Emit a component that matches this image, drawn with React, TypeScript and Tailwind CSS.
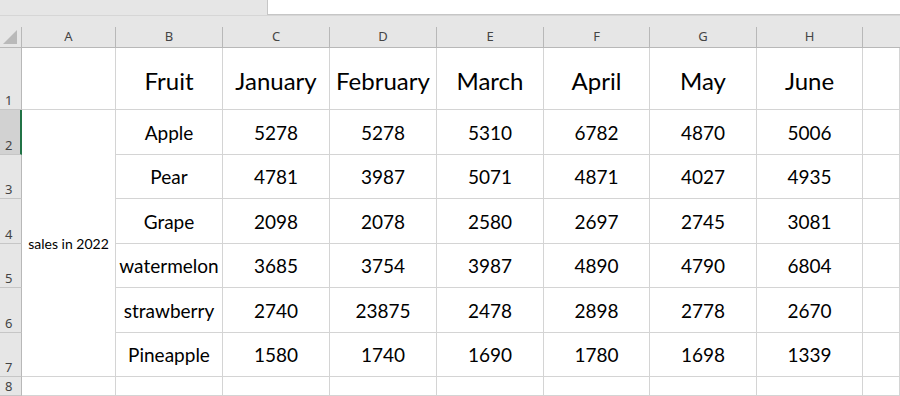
import React from "react";

const cols = ["A", "B", "C", "D", "E", "F", "G", "H"];
const months = ["Fruit", "January", "February", "March", "April", "May", "June"];

const rows: [string, number[]][] = [
  ["Apple", [5278, 5278, 5310, 6782, 4870, 5006]],
  ["Pear", [4781, 3987, 5071, 4871, 4027, 4935]],
  ["Grape", [2098, 2078, 2580, 2697, 2745, 3081]],
  ["watermelon", [3685, 3754, 3987, 4890, 4790, 6804]],
  ["strawberry", [2740, 23875, 2478, 2898, 2778, 2670]],
  ["Pineapple", [1580, 1740, 1690, 1780, 1698, 1339]],
];

const gridCols = "grid grid-cols-[22px_94px_107px_107px_107px_107px_106px_107px_106px_1fr]";

const RowHead = ({ n, active }: { n: number; active?: boolean }) => (
  <div
    className={
      "flex items-end pl-[5px] pb-[2px] text-[13px] leading-none text-[#444] font-['Noto_Sans'] border-b border-[#c6c6c6] " +
      (active ? "bg-[#d2d2d2] border-r-2 border-r-[#217346]" : "bg-[#e6e6e6] border-r border-r-[#b8b8b8]")
    }
  >
    {n}
  </div>
);

const Cell = ({ children, className = "" }: { children?: React.ReactNode; className?: string }) => (
  <div className={"flex items-center justify-center border-r border-b border-[#d4d4d4] text-black " + className}>
    {children}
  </div>
);

export default function App() {
  return (
    <div className="w-[900px] h-[396px] overflow-hidden bg-white font-['Lato',sans-serif]">
      {/* formula bar strip */}
      <div className="h-[16px] flex bg-[#e6e6e6] border-b border-[#d6d6d6]">
        <div className="w-[267px]" />
        <div className="flex-1 h-[15px] bg-white border-l border-b border-[#c6c6c6]" />
      </div>

      {/* column headers */}
      <div className={gridCols + " h-[32px] pt-[11px] bg-[#e6e6e6] border-b border-[#b8b8b8]"}>
        <div className="relative border-r border-[#b8b8b8]">
          <svg width="14" height="14" className="absolute right-[4px] bottom-[3px]">
            <polygon points="14,0 14,14 0,14" fill="#b9b9b9" />
          </svg>
        </div>
        {cols.map((c) => (
          <div
            key={c}
            className="flex items-center justify-center border-r border-[#b8b8b8] text-[13px] text-[#444] font-['Noto_Sans']"
          >
            {c}
          </div>
        ))}
        <div />
      </div>

      {/* sheet body */}
      <div className={gridCols + " grid-rows-[62px_45px_44px_45px_44px_45px_44px_1fr] h-[348px]"}>
        <RowHead n={1} />
        <Cell />
        {months.map((m) => (
          <Cell key={m} className="text-[24px] pt-[4px]">
            {m}
          </Cell>
        ))}
        <Cell />

        {rows.map(([fruit, vals], i) => (
          <React.Fragment key={fruit}>
            <RowHead n={i + 2} active={i === 0} />
            {i === 0 && (
              <Cell className="row-span-6 text-[14px]">sales in 2022</Cell>
            )}
            <Cell className="text-[19px] pt-[2px]">{fruit}</Cell>
            {vals.map((v, j) => (
              <Cell key={j} className="text-[19px] pt-[2px]">
                {v}
              </Cell>
            ))}
            <Cell />
          </React.Fragment>
        ))}

        <RowHead n={8} />
        {Array.from({ length: 9 }).map((_, k) => (
          <Cell key={k} />
        ))}
      </div>
    </div>
  );
}
